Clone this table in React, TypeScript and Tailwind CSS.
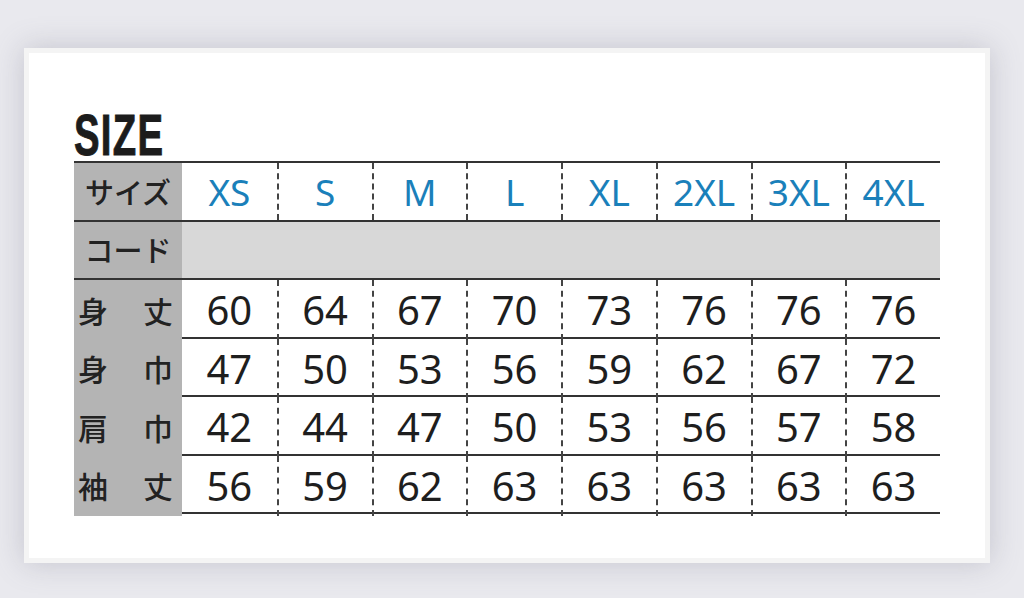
import React from 'react';

const sizes = ['XS', 'S', 'M', 'L', 'XL', '2XL', '3XL', '4XL'];

const rows: { label: [string, string]; values: number[] }[] = [
  { label: ['身', '丈'], values: [60, 64, 67, 70, 73, 76, 76, 76] },
  { label: ['身', '巾'], values: [47, 50, 53, 56, 59, 62, 67, 72] },
  { label: ['肩', '巾'], values: [42, 44, 47, 50, 53, 56, 57, 58] },
  { label: ['袖', '丈'], values: [56, 59, 62, 63, 63, 63, 63, 63] },
];

const jp = "font-['Noto_Sans_CJK_JP',sans-serif]";
const num = "font-['Noto_Sans','Noto_Sans_CJK_JP',sans-serif]";

const rowCls = 'grid grid-cols-[108px_repeat(8,1fr)] h-[58.5px] border-b-2 border-[#333]';

const App = () => {
  return (
    <div className="w-[1024px] h-[598px] bg-[#e9e9ee] pt-[48px] pl-[24px] overflow-hidden">
      <div className="w-[966px] h-[515px] bg-[#f4f4f4] p-[5px] shadow-[0_0_28px_rgba(110,110,130,0.3)]">
        <div className="h-full bg-white pl-[45px] pt-[55px]">
          <h1 className="h-[53px] font-['Liberation_Sans',sans-serif] font-bold text-[58px] leading-[53px] text-[#1c1c1c] scale-x-[0.66] origin-left tracking-[2px] [-webkit-text-stroke:1px_#1c1c1c]">
            SIZE
          </h1>
          <div className="w-[866px] border-t-2 border-[#333]">
            {/* header */}
            <div className={rowCls}>
              <div className={`bg-[#b4b4b4] flex items-center justify-center text-[29px] font-medium text-[#222] ${jp}`}>サイズ</div>
              {sizes.map((s, i) => (
                <div
                  key={s}
                  className={`flex items-center justify-center text-[37px] text-[#1a80ba] ${num} ${i > 0 ? 'border-l-2 border-dashed border-[#444]' : ''}`}
                >
                  {s}
                </div>
              ))}
            </div>
            {/* code */}
            <div className={rowCls}>
              <div className={`bg-[#b4b4b4] flex items-center justify-center text-[29px] font-medium text-[#222] ${jp}`}>コード</div>
              <div className="col-span-8 bg-[#d8d8d8]" />
            </div>
            {rows.map((r, ri) => (
              <div key={ri} className={rowCls}>
                <div className={`bg-[#b4b4b4] flex items-center justify-between pl-[4px] pr-[9px] text-[30px] font-medium text-[#222] ${jp}`}>
                  <span>{r.label[0]}</span>
                  <span>{r.label[1]}</span>
                </div>
                {r.values.map((v, i) => (
                  <div
                    key={i}
                    className={`flex items-center justify-center text-[40px] text-[#1e1e1e] ${num} ${i > 0 ? 'border-l-2 border-dashed border-[#444]' : ''}`}
                  >
                    {v}
                  </div>
                ))}
              </div>
            ))}
          </div>
        </div>
      </div>
    </div>
  );
};

export default App;
